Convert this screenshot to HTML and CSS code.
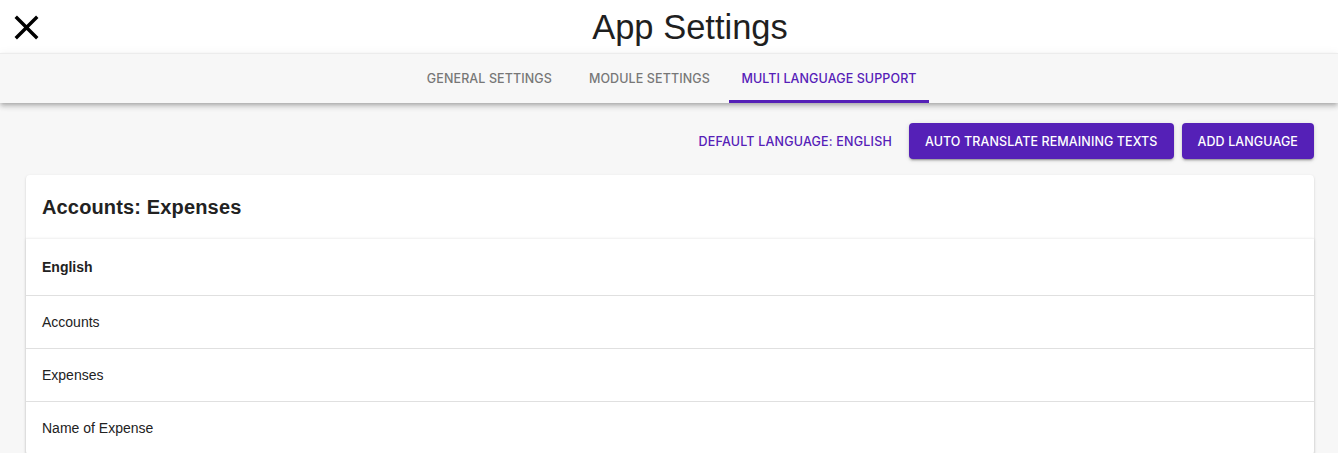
FILE: index.html
```html
<!DOCTYPE html>
<html>
<head>
<meta charset="utf-8">
<link rel="stylesheet" href="styles.css">
</head>
<body>
<header class="topbar">
  <button class="close" aria-label="Close">
    <svg width="24" height="24" viewBox="0 0 24 24"><path d="M19 6.41 17.59 5 12 10.59 6.41 5 5 6.41 10.59 12 5 17.59 6.41 19 12 13.41 17.59 19 19 17.59 13.41 12z" fill="#000"/></svg>
  </button>
  <h1 class="title">App Settings</h1>
</header>
<nav class="tabs">
  <div class="tab">General Settings</div>
  <div class="tab">Module Settings</div>
  <div class="tab active">Multi Language Support</div>
</nav>
<main class="content">
  <div class="actions">
    <button class="btn text">Default Language: English</button>
    <button class="btn contained wide">Auto Translate Remaining Texts</button>
    <button class="btn contained">Add Language</button>
  </div>
  <section class="card">
    <h2 class="card-title">Accounts: Expenses</h2>
    <div class="table">
      <div class="row head">English</div>
      <div class="row">Accounts</div>
      <div class="row">Expenses</div>
      <div class="row">Name of Expense</div>
    </div>
  </section>
</main>
</body>
</html>
```
FILE: styles.css
```css
* { box-sizing: border-box; }
html, body { margin: 0; padding: 0; }
body {
  background: #f7f7f7;
  font-family: "Liberation Sans", Arial, sans-serif;
  color: rgba(0,0,0,0.87);
  overflow: hidden;
}
.topbar {
  height: 53px;
  background: #fff;
  display: flex;
  align-items: center;
}
.close {
  width: 42px;
  height: 48px;
  margin-top: 1px;
  border: none;
  background: none;
  padding: 0 0 0 5.5px;
  display: flex;
  align-items: center;
  justify-content: flex-start;
  flex-shrink: 0;
  overflow: visible;
}
.close svg { width: 41px; height: 41px; flex-shrink: 0; }
.title {
  flex: 1;
  margin: 0;
  text-align: center;
  font-weight: 400;
  font-size: 34.5px;
  color: #1f1f1f;
  padding-top: 2px;
}
.tabs {
  position: relative;
  z-index: 1;
  height: 50px;
  background: #f7f7f7;
  display: flex;
  justify-content: center;
  box-shadow: 0 2px 4px -1px rgba(0,0,0,0.2), 0 4px 5px 0 rgba(0,0,0,0.14), 0 1px 10px 0 rgba(0,0,0,0.06);
  border-top: 1px solid #ececec;
}
.tab {
  font-family: Inter, Roboto, "Liberation Sans", sans-serif;
  font-weight: 500;
  font-size: 12.5px;
  letter-spacing: 0.1px;
  text-transform: uppercase;
  color: #777;
  padding: 3px 12px 0;
  min-width: 160px;
  display: flex;
  align-items: center;
  justify-content: center;
  border-bottom: 3px solid transparent;
}
.tab.active {
  color: #5520b7;
  border-bottom-color: #5520b7;
}
.content {
  padding: 20px 24px 0 26px;
}
.actions {
  display: flex;
  justify-content: flex-end;
  align-items: center;
  gap: 8px;
}
.btn {
  font-family: Inter, Roboto, "Liberation Sans", sans-serif;
  font-weight: 500;
  font-size: 12.5px;
  letter-spacing: 0.1px;
  text-transform: uppercase;
  height: 36px;
  border: none;
  border-radius: 4px;
  padding: 0 16px;
  cursor: pointer;
}
.btn.text {
  background: none;
  color: #5520b7;
  padding: 0 8px;
  margin-right: 1px;
  letter-spacing: 0.2px;
}
.btn.contained {
  background: #5520b7;
  color: #fff;
  box-shadow: 0 3px 1px -2px rgba(0,0,0,0.2), 0 2px 2px 0 rgba(0,0,0,0.14), 0 1px 5px 0 rgba(0,0,0,0.12);
}
.card {
  margin-top: 16px;
  background: #fff;
  border-radius: 4px;
  box-shadow: 0 2px 1px -1px rgba(0,0,0,0.2), 0 1px 1px 0 rgba(0,0,0,0.14), 0 1px 3px 0 rgba(0,0,0,0.12);
}
.card-title {
  margin: 0;
  font-size: 20px;
  font-weight: 700;
  letter-spacing: 0.15px;
  color: #222;
  padding: 20px 16px 19px 16px;
  line-height: 24px;
}
.table {
  border-top: 1px solid #f3f3f3;
  box-shadow: 0 1px 3px 0 rgba(0,0,0,0.12);
}
.row {
  height: 53px;
  display: flex;
  align-items: center;
  padding: 0 16px;
  font-size: 14px;
  color: #222;
  border-bottom: 1px solid #e0e0e0;
}
.row.head {
  height: 57px;
  font-weight: 700;
}
```
